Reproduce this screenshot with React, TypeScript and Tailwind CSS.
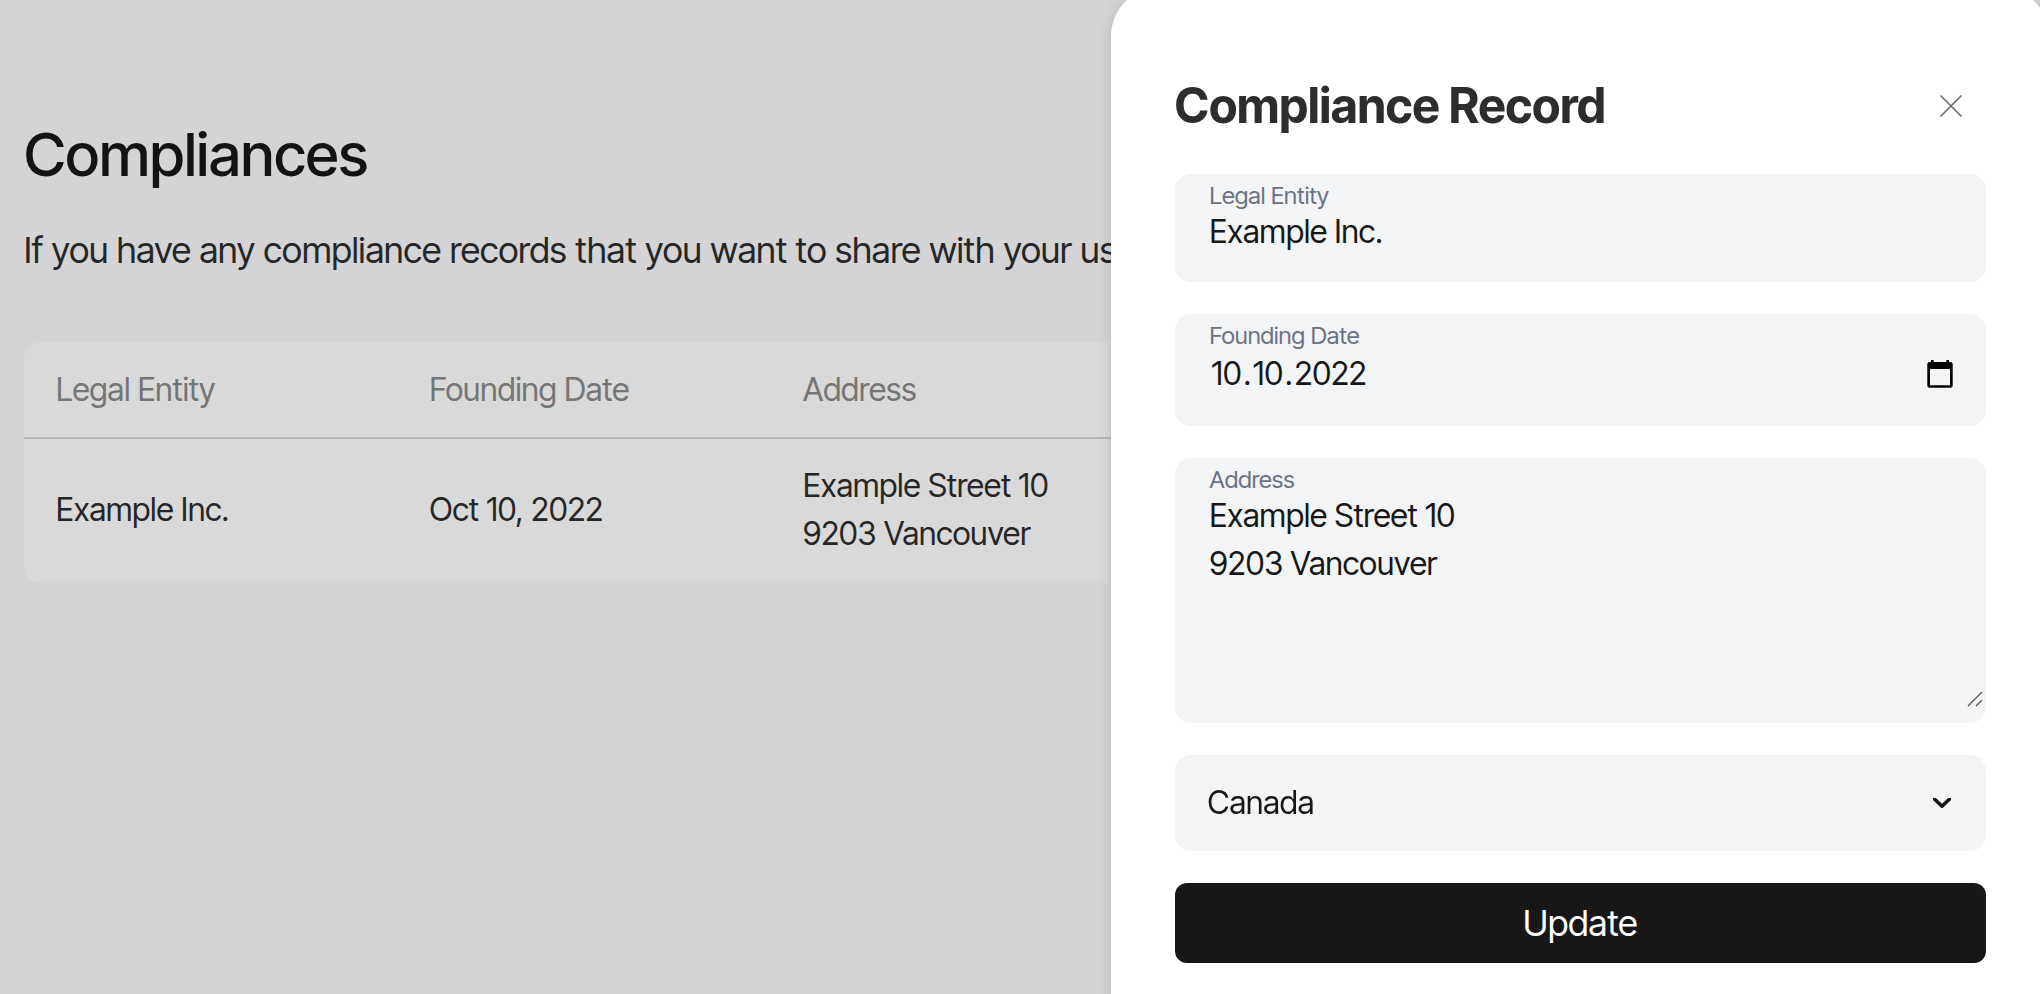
import React, { useState } from "react";

type RecordData = {
  entity: string;
  day: string;
  month: string;
  year: string;
  address: string;
  country: string;
};

function CloseIcon() {
  return (
    <svg viewBox="0 0 24 24" className="size-6" fill="none" stroke="currentColor" strokeWidth="1.7" strokeLinecap="round" aria-hidden="true">
      <path d="M2 2l20 20M22 2L2 22" />
    </svg>
  );
}

function CalendarIcon() {
  return (
    <svg viewBox="0 0 26 28" className="h-7 w-[26px]" aria-hidden="true">
      <path
        fill="#000"
        fillRule="evenodd"
        d="M4 0h2.6v2h12.8V0H22v2h1.2A2.5 2.5 0 0 1 25.7 4.5v20.9A2.4 2.4 0 0 1 23.3 27.8H2.7A2.4 2.4 0 0 1 .3 25.4V4.5A2.5 2.5 0 0 1 2.8 2H4zM3 9v16.2h20V9z"
      />
    </svg>
  );
}

function ChevronIcon() {
  return (
    <svg viewBox="0 0 18 10" className="h-[10px] w-[18px]" fill="none" stroke="#171717" strokeWidth="3.6" strokeLinecap="round" strokeLinejoin="round" aria-hidden="true">
      <path d="M1.7 1.3L9 8.2l7.3-6.9" />
    </svg>
  );
}

function GripIcon() {
  return (
    <svg viewBox="0 0 16 16" className="size-4" fill="none" stroke="#525252" strokeWidth="1.3" aria-hidden="true">
      <path d="M1 15L15 1M9 15l6-6" />
    </svg>
  );
}

function Field({ id, label, children }: { id: string; label: string; children: React.ReactNode }) {
  return (
    <div className="relative flex flex-col rounded-2xl bg-gray-100 pt-2.5 pr-[33px] pl-[35px]">
      <label htmlFor={id} className="text-[24px] leading-[24px] text-gray-500">
        {label}
      </label>
      {children}
    </div>
  );
}

export default function App() {
  const [record, setRecord] = useState<RecordData>({
    entity: "Example Inc.",
    day: "10",
    month: "10",
    year: "2022",
    address: "Example Street 10\n9203 Vancouver",
    country: "Canada",
  });
  const update = (key: keyof RecordData) => (e: { target: { value: string } }) =>
    setRecord({ ...record, [key]: e.target.value });

  return (
    <div className="min-h-screen overflow-hidden bg-[#f9fafc] font-['Inter_Tight','Inter',sans-serif] text-[32px] leading-[48px] text-[#2d2d2d]">
      <main className="px-6 pt-[118px]">
        <h1 className="text-[60px] leading-[72px] font-medium text-[#171717]">Compliances</h1>
        <p className="mt-8 text-[36px] leading-[56px] whitespace-nowrap">
          If you have any compliance records that you want to share with your users
        </p>
        <div className="mt-16 overflow-hidden rounded-2xl bg-white">
          <table className="w-full table-fixed border-collapse text-left">
            <colgroup>
              <col className="w-[18.75%]" />
              <col className="w-[18.75%]" />
              <col />
            </colgroup>
            <thead>
              <tr className="border-b-2 border-[#d5d5d5] text-[#8a8a8a]">
                <th className="px-8 pt-6 pb-[23px] font-normal">Legal Entity</th>
                <th className="px-8 pt-6 pb-[23px] font-normal">Founding Date</th>
                <th className="px-8 pt-6 pb-[23px] font-normal">Address</th>
              </tr>
            </thead>
            <tbody>
              <tr>
                <td className="px-8 pt-[23px] pb-[25px]">Example Inc.</td>
                <td className="px-8 pt-[23px] pb-[25px]">Oct 10, 2022</td>
                <td className="px-8 pt-[23px] pb-[25px]">
                  Example Street 10
                  <br />
                  9203 Vancouver
                </td>
              </tr>
            </tbody>
          </table>
        </div>
      </main>

      <div className="fixed inset-0 overflow-hidden bg-black/15">
        <section
          role="dialog"
          aria-labelledby="drawer-title"
          className="absolute -top-3 -right-[9px] -bottom-12 w-[46%] rounded-[48px] bg-white pt-[86px] pr-[63px] pl-16 shadow-[0_0_16px_rgba(0,0,0,0.14)]"
        >
          <header className="flex items-center justify-between pr-[23px]">
            <h2 id="drawer-title" className="text-[48px] leading-[64px] font-bold">
              Compliance Record
            </h2>
            <button type="button" aria-label="Close" className="text-[#6b6b6b]">
              <CloseIcon />
            </button>
          </header>

          <form className="mt-9 flex flex-col gap-8 text-[#171717]" onSubmit={(e) => e.preventDefault()}>
            <Field id="entity" label="Legal Entity">
              <input id="entity" value={record.entity} onChange={update("entity")} className="mb-[26px] h-12 w-full bg-transparent outline-none" />
            </Field>

            <Field id="day" label="Founding Date">
              <div className="mb-[26px] flex h-[52px] items-center justify-between">
                <div className="flex items-center">
                  <input id="day" inputMode="numeric" value={record.day} onChange={update("day")} className="field-sizing-content bg-transparent px-0.5 outline-none" />
                  <span>.</span>
                  <input aria-label="Month" inputMode="numeric" value={record.month} onChange={update("month")} className="field-sizing-content bg-transparent px-0.5 outline-none" />
                  <span>.</span>
                  <input aria-label="Year" inputMode="numeric" value={record.year} onChange={update("year")} className="field-sizing-content bg-transparent px-0.5 outline-none" />
                </div>
                <button type="button" aria-label="Pick a date">
                  <CalendarIcon />
                </button>
              </div>
            </Field>

            <Field id="address" label="Address">
              <textarea id="address" value={record.address} onChange={update("address")} className="mb-[15px] h-[216px] w-full resize-none bg-transparent outline-none" />
              <span className="pointer-events-none absolute right-[3px] bottom-4">
                <GripIcon />
              </span>
            </Field>

            <div className="relative">
              <select
                aria-label="Country"
                value={record.country}
                onChange={update("country")}
                className="block h-24 w-full appearance-none rounded-2xl bg-gray-100 px-[33px] outline-none"
              >
                <option>Canada</option>
              </select>
              <span className="pointer-events-none absolute inset-y-0 right-[35px] flex items-center">
                <ChevronIcon />
              </span>
            </div>

            <button type="submit" className="rounded-xl bg-[#171717] py-3 text-[36px] leading-[56px] text-white">
              Update
            </button>
          </form>
        </section>
      </div>
    </div>
  );
}
